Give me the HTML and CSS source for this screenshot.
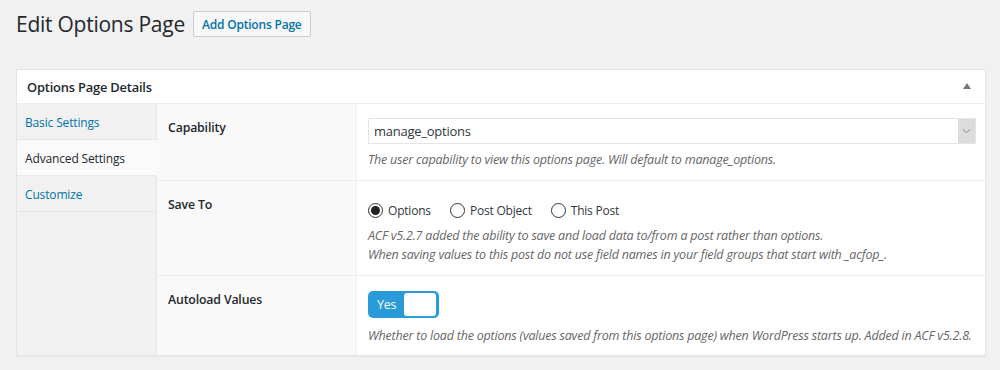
FILE: index.html
```html
<!DOCTYPE html>
<html>
<head>
<meta charset="utf-8">
<link rel="stylesheet" href="styles.css">
</head>
<body>
<div class="wrap">
  <div class="title-row">
    <h1 class="page-title">Edit Options Page</h1>
    <a class="page-action">Add Options Page</a>
  </div>
  <div class="postbox">
    <div class="postbox-header">
      <h2 class="postbox-title">Options Page Details</h2>
      <span class="collapse-arrow"></span>
    </div>
    <div class="postbox-body">
      <ul class="tabs">
        <li class="tab">Basic Settings</li>
        <li class="tab active">Advanced Settings</li>
        <li class="tab">Customize</li>
      </ul>
      <div class="fields">
        <div class="field">
          <div class="field-label">Capability</div>
          <div class="field-input">
            <div class="select">
              <span class="select-value">manage_options</span>
              <span class="select-arrow"><svg width="9" height="6" viewBox="0 0 9 6"><path d="M1 1.5 L4.5 4.5 L8 1.5" fill="none" stroke="#888" stroke-width="1"/></svg></span>
            </div>
            <p class="desc">The user capability to view this options page. Will default to manage_options.</p>
          </div>
        </div>
        <div class="field">
          <div class="field-label">Save To</div>
          <div class="field-input">
            <div class="radios">
              <label class="radio checked"><span class="radio-dot"></span>Options</label>
              <label class="radio"><span class="radio-dot"></span>Post Object</label>
              <label class="radio"><span class="radio-dot"></span>This Post</label>
            </div>
            <p class="desc">ACF v5.2.7 added the ability to save and load data to/from a post rather than options.<br>When saving values to this post do not use field names in your field groups that start with _acfop_.</p>
          </div>
        </div>
        <div class="field last">
          <div class="field-label">Autoload Values</div>
          <div class="field-input">
            <div class="switch"><span class="switch-on">Yes</span><span class="switch-knob"></span></div>
            <p class="desc">Whether to load the options (values saved from this options page) when WordPress starts up. Added in ACF v5.2.8.</p>
          </div>
        </div>
      </div>
    </div>
  </div>
</div>
</body>
</html>
```

FILE: styles.css
```css
* { box-sizing: border-box; }
html, body { margin: 0; padding: 0; }
body {
  background: #f1f1f1;
  font-family: "Open Sans", "Noto Sans", sans-serif;
  color: #23282d;
  font-size: 13px;
  width: 1000px;
  height: 370px;
  overflow: hidden;
}
.wrap { padding: 11px 14px 0 16px; }
.title-row { display: flex; align-items: center; gap: 8px; height: 26px; }
.page-title {
  margin: 0;
  font-size: 21px;
  font-weight: 400;
  line-height: 26px;
  color: #23282d;
  letter-spacing: -0.25px;
}
.page-action {
  display: inline-flex;
  align-items: center;
  height: 26px;
  padding: 0 8px;
  border: 1px solid #cccccc;
  background: #f7f7f7;
  color: #0073aa;
  font-weight: 600;
  font-size: 12px;
  border-radius: 2px;
  letter-spacing: -0.2px;
}
.postbox {
  margin-top: 32px;
  width: 970px;
  background: #fff;
  border: 1px solid #e5e5e5;
  box-shadow: 0 1px 1px rgba(0,0,0,0.04);
}
.postbox-header {
  height: 34px;
  display: flex;
  align-items: center;
  justify-content: space-between;
  padding: 0 14px 0 10px;
  border-bottom: 1px solid #eeeeee;
}
.postbox-title { margin: 0; font-size: 12.9px; font-weight: 600; color: #23282d; letter-spacing: -0.2px; }
.collapse-arrow {
  width: 0; height: 0;
  border-left: 4px solid transparent;
  border-right: 4px solid transparent;
  border-bottom: 6px solid #72777c;
  margin-top: -1px;
}
.postbox-body { display: flex; }
.tabs {
  list-style: none;
  margin: 0;
  padding: 0;
  width: 140px;
  flex: none;
  background: #f1f1f1;
  border-right: 1px solid #e6e6e6;
}
.tab {
  height: 36px;
  display: flex;
  align-items: center;
  padding: 2px 0 0 8px;
  color: #0073aa;
  font-size: 12px;
  letter-spacing: -0.15px;
  border-bottom: 1px dotted #dcdcdc;
}
.tab.active { background: #fafafa; color: #23282d; margin-right: -1px; }
.fields { flex: 1; }
.field { display: flex; border-bottom: 1px solid #eeeeee; }
.field.last { border-bottom: none; }
.field-label {
  width: 200px;
  flex: none;
  background: #f9f9f9;
  border-right: 1px solid #eeeeee;
  padding: 14px 11px;
  font-weight: 600;
  font-size: 12.3px;
  line-height: 20px;
  letter-spacing: -0.15px;
}
.field-input { flex: 1; padding: 14px 11px 11px 11px; }
.select {
  height: 26px;
  width: 608px;
  border: 1px solid #e5e5e5;
  display: flex;
  align-items: center;
  justify-content: space-between;
  background: #fff;
}
.select-value { padding-left: 5px; font-size: 13px; letter-spacing: -0.25px; color: #32373c; }
.select-arrow {
  width: 17px;
  height: 24px;
  background: #dcdcdc;
  display: flex;
  align-items: center;
  justify-content: center;
}
.desc {
  margin: 6px 0 0 0;
  font-style: italic;
  color: #666;
  font-size: 12.5px;
  line-height: 19px;
  letter-spacing: -0.2px;
}
.radios { display: flex; gap: 19px; margin: 5px 0 0 0; height: 20px; align-items: center; }
.radio { display: flex; align-items: center; gap: 5px; font-size: 12px; letter-spacing: -0.2px; color: #32373c; }
.radio-dot {
  width: 15px; height: 15px;
  border: 1px solid #333;
  border-radius: 50%;
  display: inline-flex;
  align-items: center;
  justify-content: center;
}
.radio.checked .radio-dot::after {
  content: "";
  width: 9px; height: 9px;
  border-radius: 50%;
  background: #222;
}
.switch {
  width: 71px; height: 27px;
  background: #2a9bd9;
  border-radius: 5px;
  display: flex;
  align-items: center;
  justify-content: space-between;
  padding: 0 3px 0 9px;
  margin-top: 1px;
}
.switch-on { color: #fff; font-size: 12.5px; letter-spacing: -0.2px; }
.switch-knob { width: 32px; height: 23px; background: #fff; border-radius: 3px; }
.field.last .desc { margin-top: 8px; }
.field.last .field-input { padding-bottom: 10px; }
```
